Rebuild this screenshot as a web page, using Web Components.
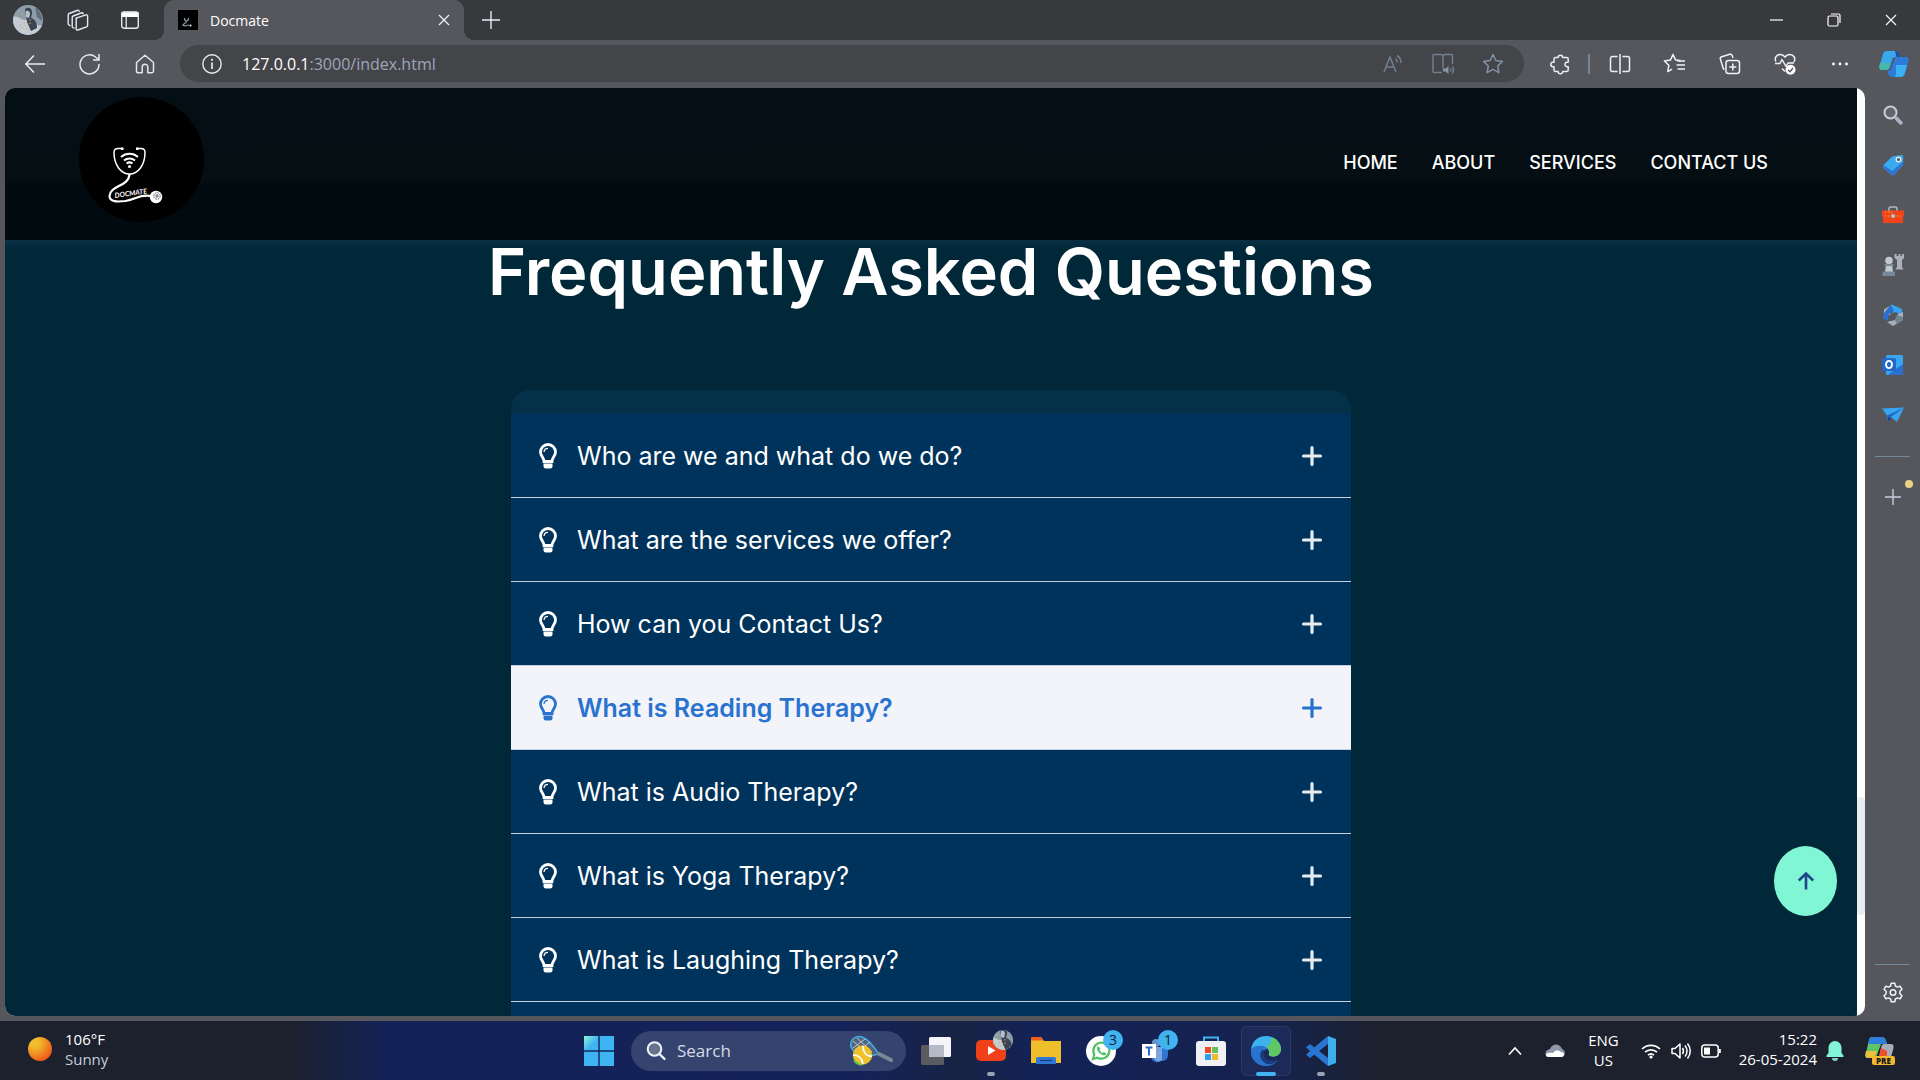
<!DOCTYPE html>
<html lang="en">
<head>
<meta charset="utf-8">
<title>Docmate</title>
<style>
  html, body { margin: 0; height: 100%; }
  body { font-family: "Open Sans", "Noto Sans", sans-serif; color: #fff; background: #56575c; overflow: hidden; }
</style>
</head>
<body>
<desktop-screen></desktop-screen>
<script>
const ICONS = {
  workspaces: ['0 0 24 24', '<g fill="none" stroke="#e4e9f0" stroke-width="1.4" stroke-linejoin="round" stroke-linecap="round"><path d="M10 10.2 20 6.8a1.2 1.2 0 0 1 1.6 1.2v9.4a1.5 1.5 0 0 1-1 1.4l-8.8 3.2a1.2 1.2 0 0 1-1.6-1.2v-9.2a1.500 1.500 0 0 1 .8-1.400Z"/><path d="M8 20.200 6.800 19.500a1.500 1.500 0 0 1-.6-1.300V9.500A1.600 1.600 0 0 1 7.200 8L15 5c1-.4 1.800-.2 2.200.8"/><path d="M4 17.600 2.800 16.800a1.500 1.500 0 0 1-.6-1.300V7A1.600 1.600 0 0 1 3.200 5.500L11 2.500c1-.4 1.800-.2 2.200.8"/></g>'],
  tabmenu: ['0 0 20 20', '<path d="M3.500 1.500h13a2.500 2.500 0 0 1 2.500 2.500v3H1V4a2.500 2.500 0 0 1 2.500-2.500Z" fill="#fff"/><rect x="1.700" y="2.200" width="16.600" height="16.100" rx="2.500" fill="none" stroke="#e4e9f0" stroke-width="1.400"/><path d="M6.200 7v11" stroke="#e4e9f0" stroke-width="1.300"/>'],
  close: ['0 0 12 12', '<path d="m1 1 10 10M11 1 1 11" stroke="#f2f4f7" stroke-width="1.200"/>'],
  plus: ['0 0 18 18', '<path d="M9 0v18M0 9h18" stroke="#e8ecf2" stroke-width="1.400"/>'],
  add: ['0 0 16 16', '<path d="M8 0v16M0 8h16" stroke="#c5cede" stroke-width="1.400"/>'],
  minimize: ['0 0 14 14', '<path d="M0 7h13" stroke="#fff" stroke-width="1.200"/>'],
  restore: ['0 0 14 14', '<g fill="none" stroke="#fff" stroke-width="1.200"><rect x="1" y="3" width="10" height="10" rx="1.500"/><path d="M4 1h7.500A1.500 1.500 0 0 1 13 2.500V10"/></g>'],
  back: ['0 0 20 20', '<path d="M20 10H1M9 1.500.800 10 9 18.500" fill="none" stroke="#e6ebf2" stroke-width="1.500"/>'],
  refresh: ['0 0 22 22', '<path d="M20 11a9.500 9.500 0 1 1-3.500-7L19.500 6.500M20 1v6h-6" fill="none" stroke="#e6ebf2" stroke-width="1.500"/>'],
  home: ['0 0 20 20', '<path d="M1.500 8.500 10 1.200l8.500 7.300V17a1.800 1.800 0 0 1-1.800 1.800h-3.900V13a2.800 2.800 0 0 0-5.600 0v5.800H3.300A1.800 1.800 0 0 1 1.500 17Z" fill="none" stroke="#e0e6f0" stroke-width="1.500" stroke-linejoin="round"/>'],
  info: ['0 0 20 20', '<circle cx="10" cy="10" r="9.200" fill="none" stroke="#e6ebf2" stroke-width="1.400"/><path d="M10 8.500V15" stroke="#fff" stroke-width="1.500"/><circle cx="10" cy="5.800" r="1" fill="#fff"/>'],
  readaloud: ['0 0 20 20', '<g fill="none" stroke="#708090" stroke-width="1.500"><path d="M1 18 7 3l6 15M3 13h8"/><path d="M12.500 4.500a5 5 0 0 1 1.800 4M14 1.500a8 8 0 0 1 4 7.500"/></g>'],
  reader: ['0 0 22 22', '<g fill="none" stroke="#708090" stroke-width="1.400"><path d="M10 19.500H2a1 1 0 0 1-1-1v-16a1 1 0 0 1 1-1h7a2 2 0 0 1 2 2v12M11 3.500a2 2 0 0 1 2-2h6.500a1 1 0 0 1 1 1V11"/><path d="M18.500 15.500q1 1.500 0 3M20.500 13.500q2 3.500 0 7"/></g><path d="M11 15.500h2.500L16.500 13v8l-3-2.500H11Z" fill="#8a96a6"/>'],
  star: ['0 0 22 22', '<path d="m11 1.500 2.900 6 6.600.900-4.800 4.600 1.200 6.600-5.900-3.200-5.900 3.200L6.300 13 1.500 8.400l6.600-.900Z" fill="none" stroke="#8392a5" stroke-width="1.500" stroke-linejoin="round"/>'],
  puzzle: ['0 0 22 22', '<path d="M7.500 4.500h1.600a2.300 2.300 0 1 1 4.600 0h4a1.500 1.500 0 0 1 1.500 1.500v3.300h-1a2.200 2.200 0 1 0 0 4.400h1V17a1.500 1.500 0 0 1-1.500 1.500h-4a2.300 2.300 0 1 1-4.600 0H6.500A1.500 1.500 0 0 1 5 17v-3.300H4a2.200 2.200 0 1 1 0-4.400h1V6a1.500 1.500 0 0 1 1.500-1.500Z" fill="none" stroke="#e8edf4" stroke-width="1.500" stroke-linejoin="round"/>'],
  split: ['0 0 22 22', '<g fill="none" stroke="#eef2f7" stroke-width="1.500"><path d="M8.500 3.500h-5A2 2 0 0 0 1.500 5.500v11a2 2 0 0 0 2 2h5M13.500 3.500h5a2 2 0 0 1 2 2v11a2 2 0 0 1-2 2h-5M11 1v20"/></g>'],
  favorites: ['0 0 22 22', '<path d="M13 7.500 11.700 7 9 1.500l-2.600 5.600-6 .900 4.400 4.300-1 6.300L8 16.200M9 1.500l2.500 5.500 5 .600" fill="none" stroke="#eef2f7" stroke-width="1.500" stroke-linejoin="round"/><path d="M13.500 8H21M12.500 12H21M13.500 16H21" stroke="#eef2f7" stroke-width="1.500"/>'],
  collections: ['0 0 22 22', '<g fill="none" stroke="#eef2f7" stroke-width="1.500"><path d="M5.500 16.500 4.500 16 1.400 6.300a2 2 0 0 1 1.300-2.500l8-2.500a2 2 0 0 1 2.500 1.300l.8 2.400"/><rect x="7" y="7.500" width="13.500" height="13" rx="2.500"/><path d="M13.800 10.500v7M10.300 14h7"/></g>'],
  health: ['0 0 22 22', '<path d="M11 18.500 8 15.500M1.800 8.500C0 4.500 3 1.500 6 1.500c2.500 0 4 1.200 5 2.700 1-1.500 2.500-2.700 5-2.700 3.500 0 6 3.500 4 7.500M1 10.500h5l2-4 4 7 2-3.500h6" fill="none" stroke="#eef2f7" stroke-width="1.500" stroke-linejoin="round"/><circle cx="16.500" cy="16.800" r="5" fill="#fff"/><path d="m14 17 2 1.800 3-3.800" stroke="#56575c" stroke-width="1.400" fill="none"/>'],
  more: ['0 0 18 18', '<g fill="#fff"><circle cx="2.500" cy="9" r="1.400"/><circle cx="9" cy="9" r="1.400"/><circle cx="15.500" cy="9" r="1.400"/></g>'],
  copilot: ['0 0 30 28', '<path d="M8 1h9c2 0 3 1 3.500 3l1 3h-5c-2 0-3 1-3.500 3l-2 7c-.6 2-1.600 3-3.500 3H3c-2.500 0-3-2-2.500-4L4 4c.6-2 2-3 4-3Z" fill="#39a9ee"/><path d="M22 27h-9c-2 0-3-1-3.500-3l-1-3c2 0 3.500-1 4-3l3-9c.5-1.500 1.500-2 3-2H27c2.500 0 3 2 2.500 4L26 24c-.6 2-2 3-4 3Z" fill="#2d7bd8"/><path d="M1 13h10l-1.500 5c-.5 1.500-1.500 2-3 2H3c-3 0-3-3-2-7Z" fill="#45b8a8"/><path d="M17 15h11l-2.500 9c-.6 2-2 3-4 3h-6c2-1 1.500-5 1.500-12Z" fill="#3cb0f3"/><path d="M16 1c3 0 4 1 4.500 3l1 3h-4Z" fill="#254b9b"/>'],
  search: ['0 0 20 20', '<circle cx="7.500" cy="7.500" r="6" fill="#60656e" stroke="#c8cdd6" stroke-width="2"/><path d="m13.500 13.500 4.300 4.300" stroke="#aab4c6" stroke-width="3.800" stroke-linecap="round"/>'],
  tag: ['0 0 22 22', '<path d="M10 2.500 19.500 1a1.500 1.500 0 0 1 1.700 1.500L21 11 12 21l-2 .3L1 13.500v-2Z" fill="#3aaaf0"/><path d="m1 13 9 8 2-.3 9-10-.3-3L10.500 17 1 11Z" fill="#2b74d2"/><circle cx="16.500" cy="5.500" r="2.300" fill="#555" stroke="#e2e8ef" stroke-width="1.400"/>'],
  toolbox: ['0 0 22 20', '<path d="M7 6V3.500A1.500 1.500 0 0 1 8.500 2h5A1.500 1.500 0 0 1 15 3.500V6" fill="none" stroke="#aab6c2" stroke-width="1.600"/><path d="M0 5.500h22V11l-1 1v6H1v-6l-1-1Z" fill="#f1431c"/><path d="M3 11h16M3 7h8" stroke="#f5a91f" stroke-dasharray="1.500 1.500"/><circle cx="11" cy="11" r="2" fill="#b6c0cc"/>'],
  chess: ['0 0 22 22', '<g fill="#c2c8d0"><circle cx="7" cy="6.500" r="3.800"/><path d="M4 10h6l1 8H3Z"/></g><path d="M2.500 10h9v2h-9ZM1 17.500h12V22H0Z" fill="#798896"/><path d="M12.500 0h2v2h2V0h2v2h1.500V0h2v4l-2 2v7l1.500 2.500h-8L15 13V6l-2.500-2Z" fill="#aab1bd"/>'],
  m365: ['0 0 22 22', '<path d="M10 .500 20 5v7l-6-4-4 1Z" fill="#36a4ee"/><path d="M10 .500 2 5.500v8l6.500-3V6Z" fill="#a5aebc"/><path d="M8.500.800 12 7l-5 3-1 6-4.500-.5V10Z" fill="#2a6fd0"/><path d="M21 8v8l-10 6-6-4 8-2 3-6Z" fill="#a5aebc"/><path d="m15 11 6 2v3l-6 4-2-4Z" fill="#73818f"/>'],
  outlook: ['0 0 22 22', '<rect x="4" y="1" width="17" height="20" rx="1.500" fill="#37a6ee"/><path d="M21 10v10a1 1 0 0 1-1 1H6Z" fill="#2a6fd0"/><rect x="0" y="4" width="14" height="13" rx="1.500" fill="#2369ca"/><ellipse cx="7" cy="10.500" rx="3" ry="3.600" fill="none" stroke="#fff" stroke-width="1.900"/>'],
  drop: ['0 0 22 16', '<path d="M0 1.500 22 .500 15 15 9.500 10.500 6 14.500 5 8.500Z" fill="#36a7ef"/><path d="M22 .500 5 8.500l1 6L9 10Z" fill="#2468c6"/><path d="m6 14.500.5-5L9.500 11Z" fill="#1c3f8f"/>'],
  gear: ['0 0 22 22', '<path d="m9.200 1.200 3.600 0 .6 2.800 2 1.100 2.700-.9 1.900 3.100-2.100 2v2.400l2.100 2-1.900 3.100-2.700-.9-2 1.100-.6 2.800H9.200L8.600 17l-2-1.100-2.700.9L2 13.700l2.100-2V9.300L2 7.300l1.900-3.100 2.700.9 2-1.100Z" fill="none" stroke="#eef3f8" stroke-width="1.500" stroke-linejoin="round"/><circle cx="11" cy="10.500" r="2.800" fill="none" stroke="#eef3f8" stroke-width="1.500"/>'],
  bulb: ['0 0 18 26', '<path d="M9 1.500a7.500 7.500 0 0 1 7.500 7.500c0 4-3.500 5.500-3.500 9.500H5C5 14.500 1.500 13 1.500 9A7.500 7.500 0 0 1 9 1.500Z" fill="none" stroke="currentColor" stroke-width="2.800"/><path d="M5 9a4 4 0 0 1 4-3.700" fill="none" stroke="currentColor" stroke-width="1.300"/><path d="M4.500 20.500h9v2.500a2.500 2.500 0 0 1-2.500 2.500H7A2.500 2.500 0 0 1 4.500 23Z" fill="currentColor"/>'],
  expand: ['0 0 20 20', '<path d="M10 1.500v17M1.500 10h17" stroke="currentColor" stroke-width="3.200" stroke-linecap="round"/>'],
  up: ['0 0 18 18', '<path d="M9 17.500V2M1.800 8.500 9 1.500l7.200 7" fill="none" stroke="#21458b" stroke-width="2.600"/>'],
  sun: ['0 0 24 24', '<defs><radialGradient id="s" cx=".3" cy=".25" r=".85"><stop offset=".2" stop-color="#f1bd2c"/><stop offset="1" stop-color="#ef5018"/></radialGradient></defs><circle cx="12" cy="12" r="12" fill="url(#s)"/>'],
  start: ['0 0 30 30', '<defs><linearGradient id="w" x2="1" y2="1"><stop stop-color="#8af6d4"/><stop offset=".6" stop-color="#3fb4f2"/></linearGradient></defs><path d="M0 0h14.300v14.300H0Z" fill="url(#w)"/><path d="M15.700 0H30v14.300H15.700ZM0 15.700h14.300V30H0ZM15.700 15.700H30V30H15.700Z" fill="#3fb4f2"/>'],
  magnifier: ['0 0 20 20', '<circle cx="8.500" cy="8" r="6.800" fill="#64748d" stroke="#f0f3f8" stroke-width="2"/><path d="m13.500 13 5 5" stroke="#f0f3f8" stroke-width="2.400" stroke-linecap="round"/>'],
  racket: ['0 0 44 30', '<path d="M1 7C2 1 9-1 14 2c5 2 9 8 15 16l-10 2C10 20-1 15 1 7Z" fill="#53657e" stroke="#3fb0ee" stroke-width="1.500"/><path d="M3 5l14 12M7 2l15 14M3 12 15 3M7 16 20 6" stroke="#bcc7d4"/><path d="m29 18 12 6" stroke="#7c8796" stroke-width="4" stroke-linecap="round"/><circle cx="12.500" cy="19" r="9.700" fill="#efc12c"/><path d="M13 10c0 7 4 11 9 10M3 19c5 0 9 3 10 9" fill="none" stroke="#fff" stroke-width="1.600"/><path d="M4 24a9.700 9.700 0 0 0 8 4.700" fill="none" stroke="#65c64f" stroke-width="2"/>'],
  taskview: ['0 0 30 28', '<rect x="0" y="8" width="23" height="20" rx="1.500" fill="#595b61"/><rect x="8" y="0" width="22" height="20" rx="1.500" fill="#f3f5f9"/><path d="M8 8h15v12H8Z" fill="#b5bac7"/>'],
  youtube: ['0 0 30 22', '<rect width="30" height="21" rx="5" fill="#f04019"/><path d="M12 6v9l7.500-4.500Z" fill="#fff"/>'],
  folder: ['0 0 30 28', '<path d="M0 2a2 2 0 0 1 2-2h8l3 4h17v22H0Z" fill="#eebf2b"/><path d="M0 2a2 2 0 0 1 2-2h8l2.500 3.500H0Z" fill="#f05e1b"/><path d="M5 27v-5a2 2 0 0 1 2-2h16a2 2 0 0 1 2 2v5Z" fill="#2d76d1"/><path d="M9 23.500h12" stroke="#173c86" stroke-width="1.200"/>'],
  whatsapp: ['0 0 30 30', '<circle cx="15" cy="15" r="15" fill="#fff"/><path d="m7 23 1.300-4.500A8 8 0 1 1 11.500 21.700Z" fill="none" stroke="#50c060" stroke-width="2.200"/><path d="M12 10c-2 2-.500 5.500 2 7.500s5.500 2.500 6.500.500l-2.500-2-1.500 1c-1.500-.700-2.500-2-3-3l1-1.500Z" fill="#50c060"/>'],
  teams: ['0 0 28 24', '<circle cx="14" cy="4" r="4" fill="#6a95c9"/><path d="M9 8h17v8a6 6 0 0 1-7 6c-5 3-10 0-10-5Z" fill="#2f75d0"/><path d="M12 8h8v13c-4 3-8 1-8-3Z" fill="#7aa6de"/><rect x="0" y="5" width="14" height="14" fill="#fff"/><path d="M3.500 8.500h7M7 8.500v8" stroke="#2868c6" stroke-width="2"/>'],
  store: ['0 0 30 30', '<path d="M8 6V1.500h14V6" fill="none" stroke="#3fb1ef" stroke-width="2"/><rect x="0" y="5" width="30" height="25" rx="3" fill="#eff1f4"/><path d="M9 11h6v6H9Z" fill="#ef4a22"/><path d="M16 11h6v6h-6Z" fill="#62c257"/><path d="M9 18h6v6H9Z" fill="#2f9fe6"/><path d="M16 18h6v6h-6Z" fill="#f0b92a"/>'],
  edge: ['0 0 30 30', '<path d="M0 14C1 5 7 0 15 0c9 0 15 6 15 13 0 5-4 7.500-8 7.500-3 0-5-1-4-3 1-4-3-7-8-7-5 0-9 1-10 3.500Z" fill="#3cb2f0"/><path d="M20 1c6 2 10 7 10 12 0 5-4 7.500-8 7.500-3 0-5-1-4-3 .8-3-1-5-3-6.500C19 9 21 5 20 1Z" fill="#5fc763"/><path d="M0 14c2-5 12-6 17-1-4 0-7 4-5 8 2 5 9 6 15 3-2 4-7 6-12 6C6 30-1 23 0 14Z" fill="#2a74d0"/><path d="M11 14c-4 5-1 12 5 14 5 1 9-1 11-4-6 2-12 1-14-4-1-3 0-5 2-6Z" fill="#173d82"/>'],
  vscode: ['0 0 30 30', '<path d="m22 0 8 3v24l-8 3Z" fill="#3caeed"/><path d="M22 0v8L4 22l-4-3.500L17 4Z" fill="#2a75d1"/><path d="M22 30v-8L4 8 0 11.500 17 26Z" fill="#2a75d1"/>'],
  chevron: ['0 0 14 10', '<path d="m1 8.500 6-6.500 6 6.500" fill="none" stroke="#fff" stroke-width="1.600"/>'],
  cloud: ['0 0 20 14', '<path d="M5 5c2-6 10-6 12 0 4 1 4 8-1 8H4C-1 13-1 6 5 5Z" fill="#8e98a8"/><path d="M1 11C2 8 5 9 8 9c3-4 7-2 8-1 4 0 4 5 0 5H4c-2 0-3-1-3-2Z" fill="#fff"/>'],
  wifi: ['0 0 20 16', '<g fill="none" stroke="#fff" stroke-width="1.600"><path d="M1 6a13 13 0 0 1 18 0M4 9.200a8.800 8.800 0 0 1 12 0M7 12.200a4.500 4.500 0 0 1 6 0"/></g><circle cx="10" cy="14" r="1.600" fill="#fff"/>'],
  sound: ['0 0 20 18', '<g fill="none" stroke="#fff" stroke-width="1.500"><path d="M1 6.500h3L9 2v14l-5-4.500H1Z" stroke-linejoin="round"/><path d="M11.500 6q2 3 0 6M14 3.500q4 5.500 0 11M16.500 1.500q5.500 7.500 0 15"/></g>'],
  battery: ['0 0 20 14', '<rect x=".8" y="1" width="16.400" height="12" rx="3" fill="none" stroke="#fff" stroke-width="1.500"/><rect x="3" y="3.500" width="6" height="7" fill="#fff"/><path d="M18.800 5v4" stroke="#fff" stroke-width="2"/>'],
  bell: ['0 0 18 20', '<path d="M9 0a6.500 6.500 0 0 1 6.500 6.500V12l2 2.500V16H.500v-1.500l2-2.500V6.500A6.500 6.500 0 0 1 9 0Z" fill="#80f5d8"/><path d="M6 17h6a3 3 0 0 1-6 0Z" fill="#80d5c8"/>'],
  pre: ['0 0 30 28', '<path d="M7 0h10c2 0 3 1 4 4l1 3h-6L12 18c-.5 2-2 3-4 3H3c-3 0-3-2-2-5L4 3c.5-2 1.500-3 3-3Z" fill="#5fc466"/><path d="M7 0h10c2 0 3 1 4 4l1 3H3l1-4c.5-2 1.500-3 3-3Z" fill="#2d7fdb"/><path d="M1 14h11l-2 5c-.5 1.500-2 2-4 2H3c-3 0-3-3-2-7Z" fill="#e9c03a"/><path d="M19 7h7c3 0 3 3 2 6l-2 7H14l2-9c.5-3 1.500-4 3-4Z" fill="#a8adbd"/><path d="m16 11 6 3v6h-8Z" fill="#ef5127"/><rect x="7" y="19" width="23" height="9" rx="2" fill="#f0b92c"/><text x="18.500" y="26.500" font-family="Open Sans" font-weight="800" font-size="8" text-anchor="middle" fill="#1b1b1b">PRE</text>'],
  avatar: ['0 0 30 30', '<defs><clipPath id="a"><circle cx="15" cy="15" r="15"/></clipPath></defs><g clip-path="url(#a)"><path d="M0 0h30v30H0Z" fill="#8f9dab"/><path d="M0 12c5-2 8 4 14 3s9 8 16 5v10H0Z" fill="#c3ccd5"/><path d="M12 4c4-3 8 0 7 5l-1 4c4 1 6 4 6 10l-6 3-4-9Z" fill="#3b4453"/><path d="M13 6c2-1 4 0 4 3l-1 4-3-1Z" fill="#b8bfc8"/><path d="M22 2c5 4 7 8 7 14l-5-4Z" fill="#5e6c7c"/><path d="M9 9v5M11 17l3 8M17 14v5M7 19l3 6" stroke="#d6ad45" stroke-dasharray="1.500 2"/></g>'],
  favicon: ['0 0 20 20', '<path d="M0 0h20v20H0Z" fill="#000"/><path d="M6.500 8q0 3 2 3t2-3M8.500 11q0 2-2.500 3t1 2l4-1" fill="none" stroke="#8fa0ad" stroke-width="1.200"/><circle cx="12.500" cy="15.500" r="1" fill="#fff"/>'],
  logo: ['0 0 125 125', '<circle cx="62.500" cy="62.500" r="62.500" fill="#000"/><g fill="none" stroke="#fff"><path d="M43 51.500h-4c-2 0-4 1-4 4C35 68 42 77 50.500 77S66 68 66 55.500c0-3-2-4-4-4h-4" stroke-width="1.500"/><path d="M50.500 77C50 90 31 88 30.500 99c0 6 8 6 16 5 11-2 15-7 25-5" stroke-width="2.200"/><path d="M42 60a13 13 0 0 1 17 0M45 63.500a8.500 8.500 0 0 1 11 0M47.500 66.500a5 5 0 0 1 6 0" stroke-width="2"/></g><path d="M42 50.500h2.500v2.500H42ZM57 50.500h2.500v2.500H57Z" fill="#fff"/><circle cx="50.500" cy="69.500" r="1.500" fill="#fff"/><circle cx="77" cy="100" r="6.200" fill="#fff"/><circle cx="78" cy="99" r="3.200" fill="none" stroke="#222" stroke-width=".8" stroke-dasharray="1.500 1"/><circle cx="78" cy="99" r="1.200" fill="none" stroke="#222" stroke-width=".7"/><text x="36" y="101" transform="rotate(-8 36 101)" font-family="Lato" font-weight="700" font-style="italic" font-size="7" fill="#fff">DOCMATE</text>']
};

function element(name, markup) {
  const template = document.createElement('template');
  template.innerHTML = '<style>*{box-sizing:border-box}button{font:inherit;color:inherit;background:none;border:0;padding:0;margin:0;display:flex;align-items:center;justify-content:center}:host([hidden]){display:none}</style>' + markup;
  customElements.define(name, class extends HTMLElement {
    constructor() {
      super();
      this.attachShadow({ mode: 'open' }).append(template.content.cloneNode(true));
    }
  });
}

customElements.define('ui-icon', class extends HTMLElement {
  connectedCallback() {
    if (this.shadowRoot) return;
    const [box, art] = ICONS[this.getAttribute('name')];
    const [, , w, h] = box.split(' ');
    this.attachShadow({ mode: 'open' }).innerHTML =
      `<style>:host{display:block;flex:none}svg{display:block;overflow:visible}</style>
       <svg viewBox="${box}" width="${w}" height="${h}" aria-hidden="true">${art}</svg>`;
  }
});

element('tab-strip', `
  <style>
    :host { display: flex; height: 40px; background: #38393d; padding-left: 3px; font-size: 14px; }
    .tool { width: 50px; }
    .actions { width: 54px; }
    .tabs { display: flex; margin-left: 7px; }
    .tab { position: relative; display: flex; align-items: center; width: 300px; padding: 0 8px 0 14px; background: #56575c; border-radius: 10px 10px 0 0; }
    .tab::before, .tab::after { content: ""; position: absolute; bottom: 0; width: 10px; height: 10px; }
    .tab::before { left: -10px; background: radial-gradient(circle at 0 0, transparent 10px, #56575c 10px); }
    .tab::after { right: -10px; background: radial-gradient(circle at 100% 0, transparent 10px, #56575c 10px); }
    .name { margin-left: 12px; flex: 1; }
    .x { width: 24px; height: 24px; }
    .new { width: 54px; }
    .win { display: flex; margin-left: auto; padding-right: 1px; }
    .win button { width: 57px; }
  </style>
  <button class="tool" aria-label="Profile"><ui-icon name="avatar"></ui-icon></button>
  <button class="tool" aria-label="Workspaces"><ui-icon name="workspaces"></ui-icon></button>
  <button class="actions" aria-label="Tab actions"><ui-icon name="tabmenu"></ui-icon></button>
  <div class="tabs"><div class="tab"><ui-icon name="favicon"></ui-icon><span class="name">Docmate</span><button class="x" aria-label="Close tab"><ui-icon name="close"></ui-icon></button></div></div>
  <button class="new" aria-label="New tab"><ui-icon name="plus"></ui-icon></button>
  <div class="win">
    <button aria-label="Minimize"><ui-icon name="minimize"></ui-icon></button>
    <button aria-label="Restore"><ui-icon name="restore"></ui-icon></button>
    <button aria-label="Close"><ui-icon name="close"></ui-icon></button>
  </div>`);

element('tool-bar', `
  <style>
    :host { display: flex; align-items: center; height: 48px; padding: 0 0 1px 7px; background: #56575c; }
    button { width: 55px; height: 36px; }
    .address { display: flex; align-items: center; flex: 1; height: 37px; margin: 0 8px; padding: 0 6px 0 22px; border-radius: 19px; background: #444549; font-size: 16px; color: #9ca6bb; }
    .address button { width: 50px; }
    .address .info { width: 20px; }
    .url { flex: 1; margin-left: 20px; white-space: nowrap; }
    b { font-weight: 400; color: #fff; }
    hr { width: 2px; height: 20px; margin: 0 2px 0 1px; border: 0; background: #73879a; }
    .copilot { width: 53px; }
  </style>
  <button aria-label="Back"><ui-icon name="back"></ui-icon></button>
  <button aria-label="Refresh"><ui-icon name="refresh"></ui-icon></button>
  <button aria-label="Home"><ui-icon name="home"></ui-icon></button>
  <div class="address">
    <button class="info" aria-label="Site information"><ui-icon name="info"></ui-icon></button>
    <span class="url"><b>127.0.0.1</b>:3000/index.html</span>
    <button aria-label="Read aloud"><ui-icon name="readaloud"></ui-icon></button>
    <button aria-label="Immersive reader"><ui-icon name="reader"></ui-icon></button>
    <button aria-label="Add to favorites"><ui-icon name="star"></ui-icon></button>
  </div>
  <button aria-label="Extensions"><ui-icon name="puzzle"></ui-icon></button>
  <hr>
  <button aria-label="Split screen"><ui-icon name="split"></ui-icon></button>
  <button aria-label="Favorites"><ui-icon name="favorites"></ui-icon></button>
  <button aria-label="Collections"><ui-icon name="collections"></ui-icon></button>
  <button aria-label="Browser essentials"><ui-icon name="health"></ui-icon></button>
  <button aria-label="Settings and more"><ui-icon name="more"></ui-icon></button>
  <button class="copilot" aria-label="Copilot"><ui-icon name="copilot"></ui-icon></button>`);

element('site-header', `
  <style>
    :host { display: flex; align-items: flex-start; justify-content: space-between; height: 152px; padding: 9px 89px 0 74px; background: linear-gradient(#040f15 0, #040e13 60%, #000a0f 66%, #000a0f 100%); font-family: Inter, sans-serif; }
    nav { display: flex; gap: 34px; margin-top: 55px; }
    a { color: #fff; text-decoration: none; font-size: 18px; line-height: 22px; font-weight: 500; }
  </style>
  <ui-icon name="logo"></ui-icon>
  <nav><a href="#home">HOME</a><a href="#about">ABOUT</a><a href="#services">SERVICES</a><a href="#contact">CONTACT US</a></nav>`);

element('faq-item', `
  <style>
    :host { display: block; border-bottom: 1px solid #c4d0dc; background: #00335b; color: #fff; font-weight: 400; }
    :host([active]) { background: #f3f4fa; color: #2a72cf; font-weight: 600; }
    button { width: 100%; height: 83px; padding: 0 29px 0 28px; justify-content: flex-start; font-size: 25px; line-height: 30px; }
    span { flex: 1; margin-left: 20px; text-align: left; }
    .more { color: #e6ebf2; }
    :host([active]) .more { color: inherit; }
  </style>
  <button aria-expanded="false"><ui-icon name="bulb"></ui-icon><span><slot></slot></span><ui-icon class="more" name="expand"></ui-icon></button>`);

element('faq-section', `
  <style>
    :host { display: flex; flex-direction: column; align-items: center; font-family: Inter, sans-serif; }
    h1 { margin: 0; font-size: 65px; line-height: 64px; font-weight: 600; color: #fff; white-space: nowrap; }
    .panel { width: 100%; max-width: 840px; flex: 1; margin-top: 86px; border-radius: 20px 20px 0 0; background: linear-gradient(#04304a 24px, #00335b 24px); padding-top: 24px; }
  </style>
  <h1>Frequently Asked Questions</h1>
  <div class="panel"><slot></slot></div>`);

element('side-bar', `
  <style>
    :host { display: flex; flex-direction: column; align-items: center; width: 55px; padding-top: 2px; }
    button { flex: none; width: 50px; height: 50px; position: relative; }
    hr { width: 35px; height: 1px; border: 0; margin: 0; background: #74889a; }
    .top { margin: 16px 0 15px; }
    .low { margin-top: auto; }
    .set { height: 51px; padding-top: 4px; }
    i { position: absolute; right: 5px; top: 8px; width: 8px; height: 8px; border-radius: 50%; background: #ecd184; }
  </style>
  <button aria-label="Search"><ui-icon name="search"></ui-icon></button>
  <button aria-label="Shopping"><ui-icon name="tag"></ui-icon></button>
  <button aria-label="Tools"><ui-icon name="toolbox"></ui-icon></button>
  <button aria-label="Games"><ui-icon name="chess"></ui-icon></button>
  <button aria-label="Microsoft 365"><ui-icon name="m365"></ui-icon></button>
  <button aria-label="Outlook"><ui-icon name="outlook"></ui-icon></button>
  <button aria-label="Drop"><ui-icon name="drop"></ui-icon></button>
  <hr class="top">
  <button aria-label="Customize"><ui-icon name="add"></ui-icon><i></i></button>
  <hr class="low">
  <button class="set" aria-label="Settings"><ui-icon name="gear"></ui-icon></button>`);

element('task-app', `
  <style>
    :host { display: block; width: 50px; height: 50px; color: #0c1c33; }
    button { position: relative; width: 100%; height: 100%; border-radius: 6px; }
    :host([current]) button { background: #1c2a5a; box-shadow: inset 0 0 0 1px #2b3862; }
    :host([running]) button::after, :host([current]) button::after { content: ""; position: absolute; left: 50%; bottom: 0; width: 8px; height: 4px; margin-left: -4px; border-radius: 2px; background: #98a2b5; }
    :host([current]) button::after { width: 20px; margin-left: -10px; background: #40b3f0; }
    ::slotted([slot=badge]) { position: absolute; right: 3px; top: 4px; width: 20px; height: 20px; border-radius: 50%; background: #40b3f0; font-size: 14px; line-height: 20px; text-align: center; overflow: hidden; }
  </style>
  <button><slot></slot><slot name="badge"></slot></button>`);

element('task-bar', `
  <style>
    :host { display: grid; grid-template-columns: 1fr auto 1fr; align-items: center; height: 59px; background: linear-gradient(90deg, #1c212d 0, #1c212d 15%, #132256 20%, #14225a 44%, #182344 50%, #132257 54%, #15224f 66%, #1c212d 72%, #1c212d 100%); font-size: 15px; line-height: 20px; color: #fff; }
    .weather { justify-self: start; gap: 13px; padding: 0 0 3px 28px; text-align: left; }
    small { font-size: inherit; color: #c5cede; }
    .apps { display: flex; align-items: center; gap: 5px; }
    .search { display: flex; align-items: center; width: 275px; height: 40px; margin-left: 2px; padding: 0 12px 0 15px; border-radius: 20px; background: #35446f; }
    input { flex: 1; min-width: 0; margin-left: 11px; padding: 0; border: 0; background: none; outline: 0; color: #d5dae4; font: 17px/24px "Open Sans", sans-serif; }
    input::placeholder { color: #d5dae4; opacity: 1; }
    .tray { display: flex; align-items: center; justify-self: end; padding-right: 25px; }
    .lang { margin: 0 22px 0 23px; padding-bottom: 2px; text-align: center; }
    .cloud { margin-left: 23px; }
    .net { gap: 10px; }
    .clock { margin: 0 9px 0 18px; padding: 0 0 3px; text-align: right; }
    .pre { margin-left: 21px; }
  </style>
  <button class="weather"><ui-icon name="sun"></ui-icon><span>106°F<br><small>Sunny</small></span></button>
  <div class="apps">
    <task-app><ui-icon name="start"></ui-icon></task-app>
    <label class="search"><ui-icon name="magnifier"></ui-icon><input type="text" placeholder="Search" aria-label="Search"><ui-icon name="racket"></ui-icon></label>
    <task-app><ui-icon name="taskview"></ui-icon></task-app>
    <task-app running><ui-icon name="youtube"></ui-icon><span slot="badge"><ui-icon name="avatar" style="margin:-5px"></ui-icon></span></task-app>
    <task-app><ui-icon name="folder"></ui-icon></task-app>
    <task-app><ui-icon name="whatsapp"></ui-icon><span slot="badge">3</span></task-app>
    <task-app><ui-icon name="teams"></ui-icon><span slot="badge">1</span></task-app>
    <task-app><ui-icon name="store"></ui-icon></task-app>
    <task-app current><ui-icon name="edge"></ui-icon></task-app>
    <task-app running><ui-icon name="vscode"></ui-icon></task-app>
  </div>
  <div class="tray">
    <button aria-label="Show hidden icons"><ui-icon name="chevron"></ui-icon></button>
    <button class="cloud" aria-label="OneDrive"><ui-icon name="cloud"></ui-icon></button>
    <button class="lang">ENG<br>US</button>
    <button class="net" aria-label="Network, sound and battery"><ui-icon name="wifi"></ui-icon><ui-icon name="sound"></ui-icon><ui-icon name="battery"></ui-icon></button>
    <button class="clock">15:22<br>26-05-2024</button>
    <button aria-label="Notifications"><ui-icon name="bell"></ui-icon></button>
    <button class="pre" aria-label="Copilot preview"><ui-icon name="pre"></ui-icon></button>
  </div>`);

element('desktop-screen', `
  <style>
    :host { display: flex; flex-direction: column; height: 100vh; }
    .body { display: flex; flex: 1; min-height: 0; padding: 0 0 5px 5px; background: #56575c; }
    .view { position: relative; display: flex; flex: 1; min-width: 0; overflow: hidden; border-radius: 10px; background: #fff; }
    .site { display: flex; flex-direction: column; flex: 1; min-width: 0; background: linear-gradient(#0a2f45 152px, #002838 162px); }
    faq-section { flex: 1; min-height: 0; }
    .scroll { width: 8px; padding-top: 709px; }
    .scroll::before { content: ""; display: block; height: 118px; border-radius: 4px; background: #eaedf0; }
    .top { position: absolute; right: 28px; bottom: 100px; width: 63px; height: 70px; border-radius: 50%; background: #80f6d5; }
    .top { display: flex; align-items: center; justify-content: center; }
  </style>
  <tab-strip></tab-strip>
  <tool-bar></tool-bar>
  <div class="body">
    <div class="view">
      <main class="site">
        <site-header></site-header>
        <faq-section>
          <faq-item>Who are we and what do we do?</faq-item>
          <faq-item>What are the services we offer?</faq-item>
          <faq-item>How can you Contact Us?</faq-item>
          <faq-item active>What is Reading Therapy?</faq-item>
          <faq-item>What is Audio Therapy?</faq-item>
          <faq-item>What is Yoga Therapy?</faq-item>
          <faq-item>What is Laughing Therapy?</faq-item>
        </faq-section>
      </main>
      <div class="scroll"></div>
      <a class="top" href="#top" aria-label="Back to top"><ui-icon name="up"></ui-icon></a>
    </div>
    <side-bar></side-bar>
  </div>
  <task-bar></task-bar>`);
</script>
</body>
</html>
